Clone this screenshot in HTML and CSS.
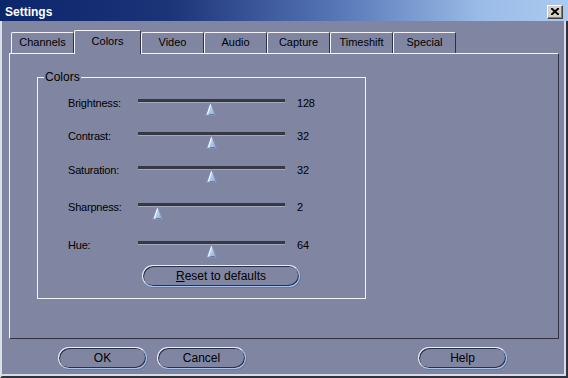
FILE: index.html
```html
<!DOCTYPE html>
<html>

<head>
  <title>Settings</title>
  <link rel="stylesheet" href="styles.css">
</head>

<body>
  <div class="window">
    <div class="titlebar">
      <span class="title">Settings</span>
      <button class="close-btn">
        <svg width="8" height="7" viewBox="0 0 8 7"><path d="M0 0 L8 7 M8 0 L0 7" stroke="#000" stroke-width="2"/></svg>
      </button>
    </div>

    <div class="frame">
      <div class="tabs">
        <div class="tab">Channels</div>
        <div class="tab active">Colors</div>
        <div class="tab">Video</div>
        <div class="tab">Audio</div>
        <div class="tab">Capture</div>
        <div class="tab">Timeshift</div>
        <div class="tab">Special</div>
      </div>

      <div class="panel">
        <fieldset class="group">
          <legend>Colors</legend>

          <div class="sliders">
            <div class="row">
              <span class="label">Brightness:</span>
              <div class="slider"><div class="track"></div><svg class="thumb" style="left: 67px" width="11" height="14" viewBox="0 0 11 14"><use href="#thumb"/></svg></div>
              <span class="value">128</span>
            </div>
            <div class="row">
              <span class="label">Contrast:</span>
              <div class="slider"><div class="track"></div><svg class="thumb" style="left: 68px" width="11" height="14" viewBox="0 0 11 14"><use href="#thumb"/></svg></div>
              <span class="value">32</span>
            </div>
            <div class="row">
              <span class="label">Saturation:</span>
              <div class="slider"><div class="track"></div><svg class="thumb" style="left: 68px" width="11" height="14" viewBox="0 0 11 14"><use href="#thumb"/></svg></div>
              <span class="value">32</span>
            </div>
            <div class="row">
              <span class="label">Sharpness:</span>
              <div class="slider"><div class="track"></div><svg class="thumb" style="left: 14px" width="11" height="14" viewBox="0 0 11 14"><use href="#thumb"/></svg></div>
              <span class="value">2</span>
            </div>
            <div class="row">
              <span class="label">Hue:</span>
              <div class="slider"><div class="track"></div><svg class="thumb" style="left: 68px" width="11" height="14" viewBox="0 0 11 14"><use href="#thumb"/></svg></div>
              <span class="value">64</span>
            </div>

            <button class="pill reset-btn"><u>R</u>eset to defaults</button>
          </div>
        </fieldset>
      </div>

      <div class="buttons">
        <button class="pill">OK</button>
        <button class="pill">Cancel</button>
        <button class="pill help-btn">Help</button>
      </div>
    </div>
  </div>

  <!-- shared slider thumb -->
  <svg width="0" height="0" class="defs">
    <defs>
      <linearGradient id="thumb-fill" x1="0" y1="0" x2="1" y2="1">
        <stop offset="0" stop-color="#eef4fc"/>
        <stop offset="0.55" stop-color="#b4c8e8"/>
        <stop offset="1" stop-color="#8ea6d0"/>
      </linearGradient>
      <g id="thumb">
        <polygon points="5.5,0.5 10.5,13.5 0.5,13.5" fill="url(#thumb-fill)" stroke="#7c90b8" stroke-width="1"/>
        <path d="M5.5 2.5 L2.5 12" stroke="#ffffff" stroke-width="1"/>
        <path d="M4 12.5 L9 12.5" stroke="#6a7ca4" stroke-width="1"/>
      </g>
    </defs>
  </svg>
</body>

</html>
```

FILE: styles.css
```css
body {
  margin: 0;
  background-color: #8086a2;
  font-family: "Liberation Sans", Arial, sans-serif;
  font-size: 12px;
  color: #000;
}

.window {
  width: 568px;
  height: 378px;
  display: flex;
  flex-direction: column;
  background-color: #8086a2;
}

.titlebar {
  height: 21px;
  display: flex;
  align-items: center;
  justify-content: space-between;
  padding: 0 5px 0 5px;
  background: linear-gradient(90deg, #0c266c 0%, #1c3478 30%, #5878b8 60%, #9cbce8 85%, #aacaf0 100%);
}

.title {
  color: #fff;
  font-weight: bold;
  font-size: 12px;
  margin-top: 2px;
}

.close-btn {
  width: 16px;
  height: 14px;
  padding: 0;
  margin-top: 2px;
  display: flex;
  align-items: center;
  justify-content: center;
  background-color: #d4d0c8;
  border: 1px solid;
  border-color: #fff #404040 #404040 #fff;
  box-shadow: inset -1px -1px 0 #808080;
}

.frame {
  flex: 1;
  display: flex;
  flex-direction: column;
  border-left: 2px solid #dcdee8;
  border-right: 2px solid #303238;
  border-bottom: 2px solid #303238;
  box-shadow: inset -2px -2px 0 #d8dce8;
}

.tabs {
  display: flex;
  align-items: flex-end;
  padding: 8px 0 0 9px;
  height: 24px;
}

.tab {
  width: 63px;
  height: 21px;
  box-sizing: border-box;
  text-align: center;
  line-height: 19px;
  font-size: 11px;
  border-top: 1px solid #f4f4f8;
  border-left: 1px solid #f4f4f8;
  border-right: 1px solid #303040;
  border-radius: 2px 2px 0 0;
}

.tab.active {
  width: 67px;
  height: 24px;
  margin-bottom: -1px;
  line-height: 20px;
  border-bottom: none;
  background-color: #8086a2;
  position: relative;
  z-index: 1;
}

.panel {
  margin-left: 7px;
  width: 550px;
  height: 286px;
  box-sizing: border-box;
  border-top: 1px solid #f4f4f8;
  border-left: 1px solid #f4f4f8;
  border-right: 1px solid #303040;
  border-bottom: 1px solid #303040;
  padding: 16px 0 0 27px;
}

.group {
  width: 329px;
  height: 229px;
  box-sizing: border-box;
  margin: 0;
  border: 1px solid #f4f4f8;
  padding: 11px 0 0 6px;
}

.group legend {
  padding: 0 1px;
  margin-left: 0;
  line-height: 14px;
}

.sliders {
  padding-left: 24px;
}

.row {
  display: flex;
  align-items: flex-start;
  height: 33px;
}

.row:nth-child(3) {
  margin-top: 1px;
}

.row:nth-child(4) {
  margin-top: 4px;
}

.row:nth-child(5) {
  margin-top: 5px;
  height: 28px;
}

.label,
.value {
  font-size: 11px;
  letter-spacing: -0.2px;
  line-height: 14px;
}

.label {
  width: 70px;
  margin-top: 1px;
}

.value {
  margin-left: 12px;
  margin-top: 1px;
}

.slider {
  position: relative;
  width: 147px;
  height: 17px;
  margin-top: 4px;
}

.track {
  height: 3px;
  background-color: #363846;
  border-bottom: 1px solid #a4a8bc;
}

.thumb {
  position: absolute;
  top: 3px;
}

.pill {
  height: 22px;
  box-sizing: border-box;
  padding: 0;
  font-family: "Liberation Sans", Arial, sans-serif;
  font-size: 12px;
  color: #000;
  background-color: #8086a2;
  border: 1px solid;
  border-color: #eef0f8 #a8c4ee #a8c4ee #eef0f8;
  border-radius: 11px;
  box-shadow: inset 1px 1px 0 #2a3048, inset -1px -1px 0 #2a3048, 1px 1px 0 #6878a0;
}

.reset-btn {
  width: 158px;
  margin-left: 74px;
}

.buttons {
  display: flex;
  gap: 10px;
  padding: 8px 59px 0 56px;
}

.buttons .pill {
  width: 89px;
}

.help-btn {
  margin-left: auto;
}

.defs {
  position: absolute;
}
```
